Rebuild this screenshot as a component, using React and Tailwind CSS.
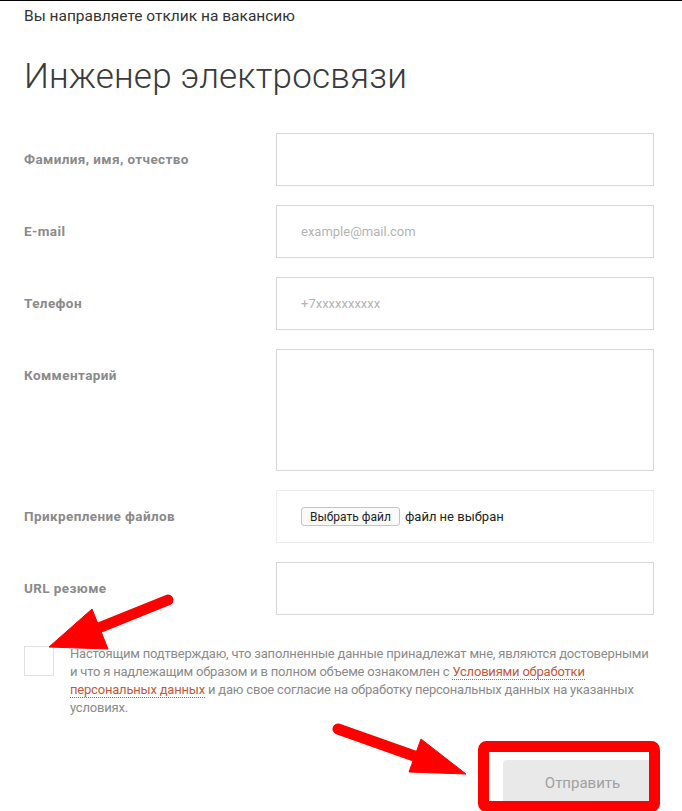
import React from 'react';

const fields = [
  { label: 'Фамилия, имя, отчество', placeholder: '' },
  { label: 'E-mail', placeholder: 'example@mail.com' },
  { label: 'Телефон', placeholder: '+7xxxxxxxxxx' },
];

const Row = ({ label, children }) => (
  <div className="flex">
    <div className="w-[252px] shrink-0 pt-[17px] text-[13.5px] leading-[18px] font-bold tracking-[0.4px] text-[#8a8a8a]">
      {label}
    </div>
    <div className="flex-1">{children}</div>
  </div>
);

// red marker strokes laid over the form
const Marks = () => (
  <svg className="absolute inset-0 pointer-events-none" width="682" height="811" viewBox="0 0 682 811">
    <g fill="#ff0000" stroke="#ff0000">
      <line x1="168" y1="599" x2="96" y2="628" strokeWidth="11" strokeLinecap="round" />
      <polygon points="49,646 92,608 108,648" strokeWidth="1" />
      <line x1="338" y1="728" x2="420" y2="757" strokeWidth="11" strokeLinecap="round" />
      <polygon points="466,773 421,738 409,771" strokeWidth="1" />
    </g>
    <rect x="483.5" y="745.5" width="171" height="60" rx="3" fill="none" stroke="#ff0000" strokeWidth="11" />
  </svg>
);

export default function App() {
  return (
    <div className="relative w-[682px] h-[811px] overflow-hidden bg-white border-t border-black font-['Roboto',sans-serif]">
      <div className="pl-6 pr-7 pt-[4px]">
        <p className="text-[15.5px] leading-[22px] text-[#333]">Вы направляете отклик на вакансию</p>
        <h1 className="mt-[28px] text-[35px] leading-[44px] font-light text-[#3a3a3a] tracking-[0.2px]">
          Инженер электросвязи
        </h1>

        <div className="mt-[34px] flex flex-col gap-[19px]">
          {fields.map((f) => (
            <Row key={f.label} label={f.label}>
              <input
                placeholder={f.placeholder}
                className="w-full h-[53px] border border-[#d6d6d6] px-6 text-[13px] text-[#333] placeholder:text-[#b3b3b3] outline-none"
              />
            </Row>
          ))}

          <Row label="Комментарий">
            <textarea className="block w-full h-[122px] border border-[#d6d6d6] resize-none outline-none" />
          </Row>

          <Row label="Прикрепление файлов">
            <div className="h-[53px] border border-[#ececec] px-6 flex items-center gap-[5px] text-[13px] text-[#222]">
              <span className="h-[19px] px-[8px] flex items-center border border-[#c4c4c4] rounded-[3px] bg-[#fafafa] text-[12px] text-[#222]">
                Выбрать файл
              </span>
              <span>файл не выбран</span>
            </div>
          </Row>

          <Row label="URL резюме">
            <input className="w-full h-[53px] border border-[#d6d6d6] outline-none" />
          </Row>
        </div>

        <div className="mt-[31px] flex gap-4">
          <span className="w-[30px] h-[30px] shrink-0 border border-[#e2e2e2]" />
          <p className="-mt-[1px] text-[13px] leading-[18px] tracking-[-0.2px] text-[#8a8a8a]">
            Настоящим подтверждаю, что заполненные данные принадлежат мне, являются достоверными и что я
            надлежащим образом и в полном объеме ознакомлен с{' '}
            <a className="text-[#c5573a] border-b border-dotted border-[#c5573a]">Условиями обработки персональных данных</a>{' '}
            и даю свое согласие на обработку персональных данных на указанных условиях.
          </p>
        </div>

        <div className="mt-[43px] flex justify-end">
          <button className="w-[151px] h-[46px] pl-[8px] rounded-tl-[4px] bg-[#e9e9e9] text-[15px] text-[#a0a0a0]">
            Отправить
          </button>
        </div>
      </div>
      <Marks />
    </div>
  );
}
